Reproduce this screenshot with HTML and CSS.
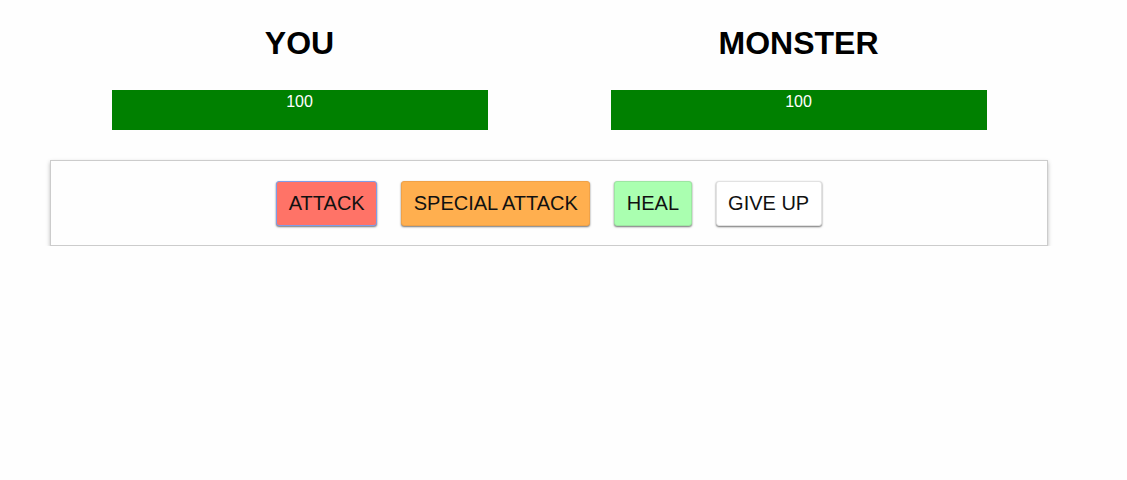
FILE: index.html
```html
<!DOCTYPE html>
<html>
<head>
<meta charset="utf-8">
<link rel="stylesheet" href="styles.css">
</head>
<body>
<div class="page">
  <section class="row">
    <div class="col">
      <h1 class="title">YOU</h1>
      <div class="healthbar"><div class="health" style="width: 100%;">100</div></div>
    </div>
    <div class="col">
      <h1 class="title">MONSTER</h1>
      <div class="healthbar"><div class="health" style="width: 100%;">100</div></div>
    </div>
  </section>
  <section class="controls">
    <button class="btn attack">ATTACK</button>
    <button class="btn special">SPECIAL ATTACK</button>
    <button class="btn heal">HEAL</button>
    <button class="btn giveup">GIVE UP</button>
  </section>
</div>
</body>
</html>
```

FILE: styles.css
```css
html, body {
  margin: 0;
  padding: 0;
  background: #fefefe;
  font-family: "Liberation Sans", Arial, sans-serif;
}

.page {
  width: 998px;
  margin-left: 50px;
}

.row {
  display: flex;
}

.col {
  flex: 1;
  display: flex;
  flex-direction: column;
  align-items: center;
}

.title {
  margin: 25px 0 28px;
  font-size: 32px;
  line-height: 37px;
  font-weight: bold;
  color: #000;
  text-align: center;
}

.healthbar {
  width: 376px;
  height: 40px;
  background: #eee;
}

.health {
  height: 40px;
  background: #008000;
  color: #fff;
  font-size: 16px;
  line-height: 18px;
  padding-top: 3px;
  box-sizing: border-box;
  text-align: center;
}

.controls {
  margin-top: 30px;
  border: 1px solid #ccc;
  box-shadow: 0 2px 4px #bbb;
  padding: 20px 0 19px;
  display: flex;
  justify-content: center;
  gap: 24px;
}

.btn {
  font-family: "Liberation Sans", Arial, sans-serif;
  font-size: 20px;
  line-height: 23px;
  padding: 10px 11.5px;
  border: 1px solid #e2e2e2;
  border-radius: 3px;
  box-shadow: 0 1px 2px rgba(0, 0, 0, 0.55);
  color: #111;
  margin: 0;
}

.attack {
  background: #ff7367;
  border-color: #7f9ce8;
}

.special {
  background: #ffaf4f;
  border-color: #f0a248;
}

.heal {
  background: #aaffb0;
  border-color: #9de6a2;
}

.giveup {
  background: #ffffff;
}
```
